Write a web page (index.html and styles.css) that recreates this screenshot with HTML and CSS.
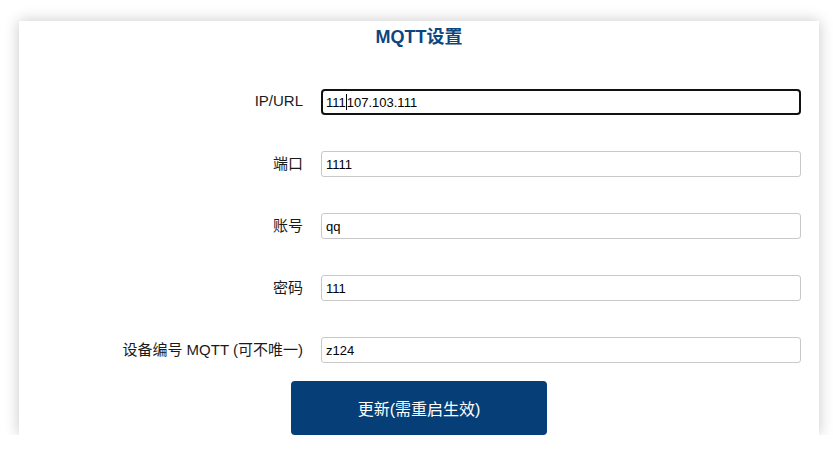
FILE: index.html
```html
<!DOCTYPE html>
<html>
<head>
<meta charset="utf-8">
<link rel="stylesheet" href="styles.css">
</head>
<body>
<div class="card">
  <h2 class="title">MQTT设置</h2>
  <form class="form">
    <div class="row">
      <label class="label">IP/URL</label>
      <div class="field focused"><span class="txt">111</span><span class="caret"></span><span class="txt">107.103.111</span></div>
    </div>
    <div class="row">
      <label class="label">端口</label>
      <input class="input" type="text" value="1111">
    </div>
    <div class="row">
      <label class="label">账号</label>
      <input class="input" type="text" value="qq">
    </div>
    <div class="row">
      <label class="label">密码</label>
      <input class="input" type="text" value="111">
    </div>
    <div class="row">
      <label class="label">设备编号 MQTT (可不唯一)</label>
      <input class="input" type="text" value="z124">
    </div>
    <div class="actions">
      <button type="button" class="btn">更新(需重启生效)</button>
    </div>
  </form>
</div>
</body>
</html>
```
FILE: styles.css
```css
html, body {
  margin: 0;
  padding: 0;
  background: #ffffff;
}
body {
  padding: 21px 14px 0 19px;
  font-family: "Liberation Sans", Arial, "Noto Sans CJK SC", sans-serif;
}
.card {
  width: 800px;
  height: 414px;
  background: #fff;
  box-shadow: 0 0 14px rgba(0, 0, 0, 0.22);
  box-sizing: border-box;
  display: flex;
  flex-direction: column;
  overflow: hidden;
}
.title {
  margin: 0;
  height: 32px;
  line-height: 32px;
  text-align: center;
  font-size: 18px;
  font-weight: bold;
  color: #0d467f;
}
.form {
  margin-top: 36px;
  display: flex;
  flex-direction: column;
  gap: 36px;
}
.row {
  display: flex;
  align-items: center;
  height: 26px;
}
.label {
  width: 284px;
  text-align: right;
  padding-right: 18px;
  font-size: 15px;
  color: #1a1a1a;
  margin-top: -3px;
  white-space: nowrap;
}
.input, .field {
  width: 480px;
  height: 26px;
  box-sizing: border-box;
  border: 1px solid #c8c8c8;
  border-radius: 3px;
  padding: 0 4px;
  font-family: "Liberation Sans", Arial, sans-serif;
  font-size: 13px;
  color: #000;
  outline: none;
  background: #fff;
}
.field {
  display: flex;
  align-items: center;
}
.focused {
  border: 2px solid #111;
  border-radius: 4px;
  padding: 0 3px;
}
.caret {
  display: inline-block;
  width: 1px;
  height: 16px;
  background: #000;
}
.actions {
  display: flex;
  justify-content: center;
  margin-top: -18px;
}
.btn {
  width: 256px;
  height: 54px;
  border: none;
  border-radius: 4px;
  background: #063f77;
  color: #fff;
  font-family: "Liberation Sans", Arial, "Noto Sans CJK SC", sans-serif;
  font-size: 16px;
  cursor: pointer;
}
```
